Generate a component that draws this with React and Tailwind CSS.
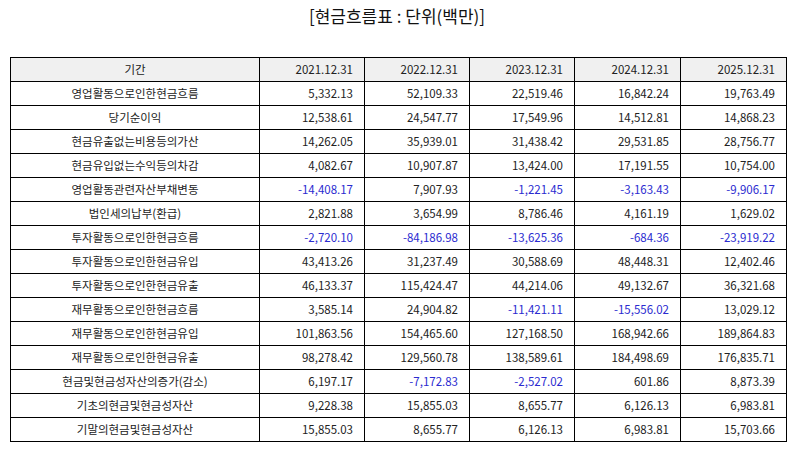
import React from "react";

const years = ["2021.12.31", "2022.12.31", "2023.12.31", "2024.12.31", "2025.12.31"];

const rows = [
  ["영업활동으로인한현금흐름", "5,332.13", "52,109.33", "22,519.46", "16,842.24", "19,763.49"],
  ["당기순이익", "12,538.61", "24,547.77", "17,549.96", "14,512.81", "14,868.23"],
  ["현금유출없는비용등의가산", "14,262.05", "35,939.01", "31,438.42", "29,531.85", "28,756.77"],
  ["현금유입없는수익등의차감", "4,082.67", "10,907.87", "13,424.00", "17,191.55", "10,754.00"],
  ["영업활동관련자산부채변동", "-14,408.17", "7,907.93", "-1,221.45", "-3,163.43", "-9,906.17"],
  ["법인세의납부(환급)", "2,821.88", "3,654.99", "8,786.46", "4,161.19", "1,629.02"],
  ["투자활동으로인한현금흐름", "-2,720.10", "-84,186.98", "-13,625.36", "-684.36", "-23,919.22"],
  ["투자활동으로인한현금유입", "43,413.26", "31,237.49", "30,588.69", "48,448.31", "12,402.46"],
  ["투자활동으로인한현금유출", "46,133.37", "115,424.47", "44,214.06", "49,132.67", "36,321.68"],
  ["재무활동으로인한현금흐름", "3,585.14", "24,904.82", "-11,421.11", "-15,556.02", "13,029.12"],
  ["재무활동으로인한현금유입", "101,863.56", "154,465.60", "127,168.50", "168,942.66", "189,864.83"],
  ["재무활동으로인한현금유출", "98,278.42", "129,560.78", "138,589.61", "184,498.69", "176,835.71"],
  ["현금및현금성자산의증가(감소)", "6,197.17", "-7,172.83", "-2,527.02", "601.86", "8,873.39"],
  ["기초의현금및현금성자산", "9,228.38", "15,855.03", "8,655.77", "6,126.13", "6,983.81"],
  ["기말의현금및현금성자산", "15,855.03", "8,655.77", "6,126.13", "6,983.81", "15,703.66"],
];

export default function App() {
  return (
    <div
      className="w-[794px] h-[452px] bg-white text-[#222] overflow-hidden"
      style={{ fontFamily: "'Noto Sans CJK KR', 'Noto Sans', sans-serif" }}
    >
      <h1 className="pt-[5px] text-center text-[17px] leading-[22px] font-normal text-[#111]">
        [현금흐름표 : 단위(백만)]
      </h1>

      <div className="px-[10px] pt-[30px]">
        <table className="w-[776px] table-fixed border-collapse text-[11.5px]">
          <colgroup>
            <col className="w-[249px]" />
            <col className="w-[105px]" />
            <col className="w-[105px]" />
            <col className="w-[105px]" />
            <col className="w-[106px]" />
            <col className="w-[106px]" />
          </colgroup>
          <thead>
            <tr className="h-[24px] bg-[#f0f0f0]">
              <th className="border border-black font-normal text-center">기간</th>
              {years.map((y) => (
                <th key={y} className="border border-black font-normal text-right pr-[11px]">
                  {y}
                </th>
              ))}
            </tr>
          </thead>
          <tbody>
            {rows.map(([label, ...vals]) => (
              <tr key={label} className="h-[24px]">
                <td className="border border-black text-center">{label}</td>
                {vals.map((v, i) => (
                  <td
                    key={i}
                    className={`border border-black text-right pr-[11px] ${
                      v.startsWith("-") ? "text-[#2b2bd0]" : ""
                    }`}
                  >
                    {v}
                  </td>
                ))}
              </tr>
            ))}
          </tbody>
        </table>
      </div>
    </div>
  );
}
